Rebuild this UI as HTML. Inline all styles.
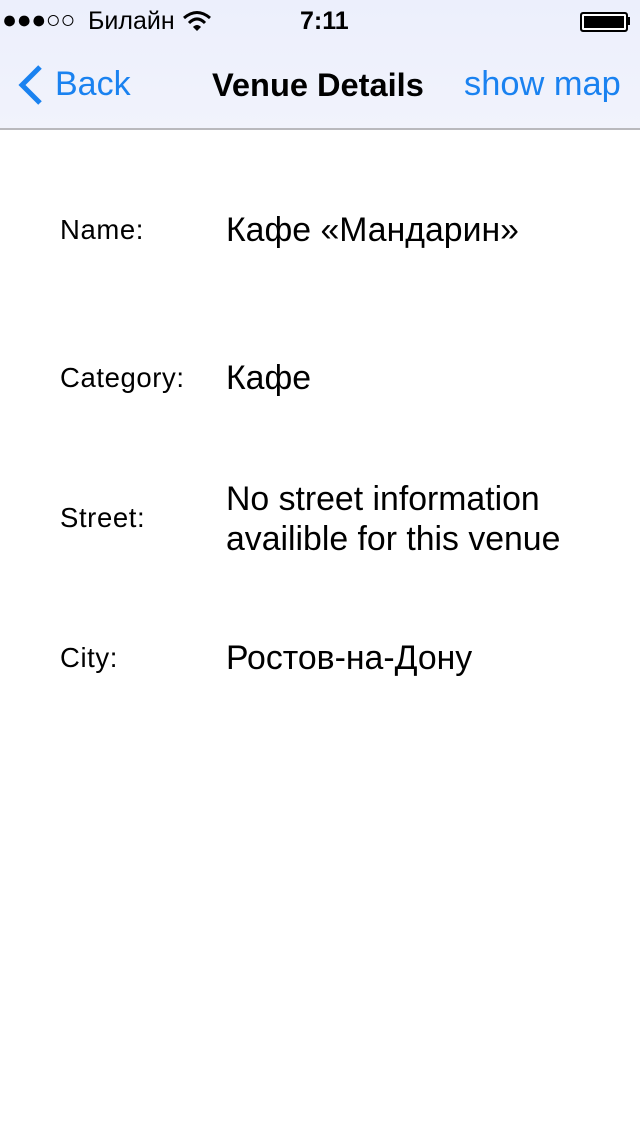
<!DOCTYPE html>
<html><head><meta charset="utf-8"><style>
html,body{margin:0;padding:0;width:640px;height:1136px;background:#fff;overflow:hidden;font-family:"Liberation Sans",sans-serif;}
.bar{position:absolute;left:0;top:0;width:640px;height:128px;background:linear-gradient(#eceffc,#f1f3fc);border-bottom:2px solid #b9b9bd;}
.t{position:absolute;white-space:nowrap;}
.l{font-size:27.5px;letter-spacing:0.6px}
</style></head><body>
<div class="bar"></div>
<div class="t" style="left:2px;top:6px;font-size:25px;color:#000;letter-spacing:-0.5px">●●●○○</div>
<div class="t" style="left:88px;top:7px;font-size:25px;color:#000">Билайн</div>
<svg style="position:absolute;left:182px;top:10px" width="30" height="22" viewBox="0 0 30 22"><path d="M2 8 Q15 -3 28 8" stroke="#000" stroke-width="3" fill="none"/><path d="M7 13 Q15 5 23 13" stroke="#000" stroke-width="3" fill="none"/><path d="M11 17 L15 21 L19 17 Q15 13 11 17Z" fill="#000"/></svg>
<div class="t" style="left:300px;top:7px;font-size:25px;font-weight:bold;color:#000">7:11</div>
<div style="position:absolute;left:580px;top:12px;width:44px;height:16px;border:2px solid #000;border-radius:3px;background:#000;box-shadow:inset 0 0 0 2px #fff"></div>
<div style="position:absolute;left:627px;top:17px;width:3px;height:8px;background:#000"></div>
<svg style="position:absolute;left:16px;top:64px" width="28" height="42" viewBox="0 0 28 42"><path d="M24 3 L6 21 L24 39" stroke="#1a82f0" stroke-width="5" fill="none"/></svg>
<div class="t" style="left:55px;top:65px;font-size:34px;color:#1a82f0">Back</div>
<div class="t" style="left:212px;top:66px;font-size:32.6px;font-weight:bold;color:#000">Venue Details</div>
<div class="t" style="left:464px;top:65px;font-size:34.4px;color:#1a82f0">show map</div>
<div class="t l" style="left:60px;top:214px">Name:</div>
<div class="t" style="left:226px;top:211px;font-size:33.8px">Кафе «Мандарин»</div>
<div class="t l" style="left:60px;top:362px">Category:</div>
<div class="t" style="left:226px;top:359px;font-size:33.8px">Кафе</div>
<div class="t l" style="left:60px;top:502px">Street:</div>
<div class="t" style="left:226px;top:479px;font-size:33.8px;line-height:40px">No street information<br>availible for this venue</div>
<div class="t l" style="left:60px;top:642px">City:</div>
<div class="t" style="left:226px;top:639px;font-size:33.8px">Ростов-на-Дону</div>
</body></html>
